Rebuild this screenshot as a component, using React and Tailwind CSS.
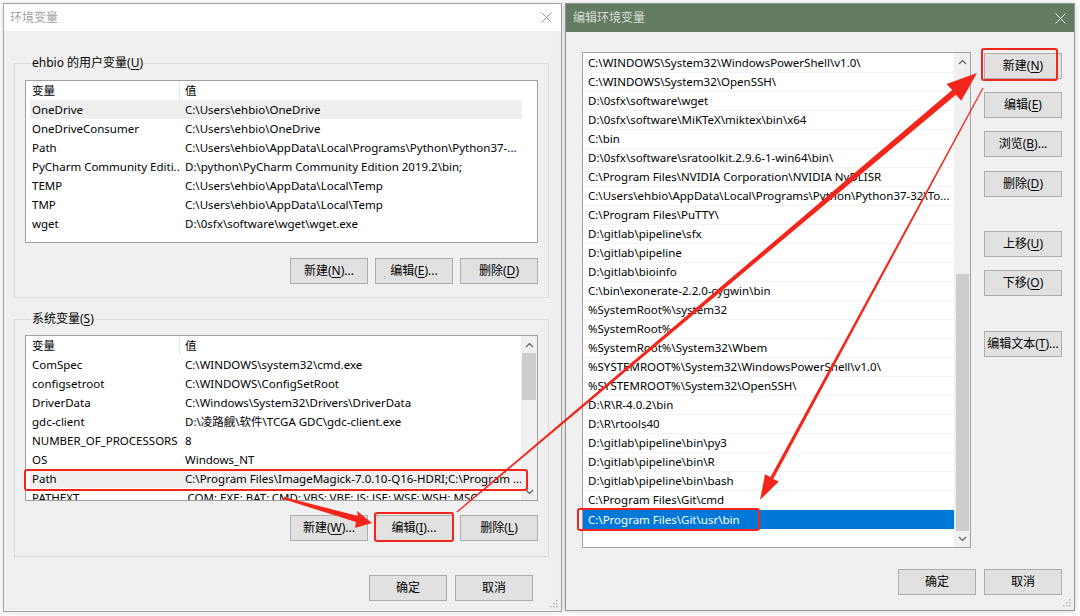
import React from 'react';

const userVars = [
  ['OneDrive', 'C:\\Users\\ehbio\\OneDrive', true],
  ['OneDriveConsumer', 'C:\\Users\\ehbio\\OneDrive'],
  ['Path', 'C:\\Users\\ehbio\\AppData\\Local\\Programs\\Python\\Python37-...'],
  ['PyCharm Community Editi...', 'D:\\python\\PyCharm Community Edition 2019.2\\bin;'],
  ['TEMP', 'C:\\Users\\ehbio\\AppData\\Local\\Temp'],
  ['TMP', 'C:\\Users\\ehbio\\AppData\\Local\\Temp'],
  ['wget', 'D:\\0sfx\\software\\wget\\wget.exe'],
];

const sysVars = [
  ['ComSpec', 'C:\\WINDOWS\\system32\\cmd.exe'],
  ['configsetroot', 'C:\\WINDOWS\\ConfigSetRoot'],
  ['DriverData', 'C:\\Windows\\System32\\Drivers\\DriverData'],
  ['gdc-client', 'D:\\凌路觎\\软件\\TCGA GDC\\gdc-client.exe'],
  ['NUMBER_OF_PROCESSORS', '8'],
  ['OS', 'Windows_NT'],
  ['Path', 'C:\\Program Files\\ImageMagick-7.0.10-Q16-HDRI;C:\\Program ...', true],
  ['PATHEXT', '.COM;.EXE;.BAT;.CMD;.VBS;.VBE;.JS;.JSE;.WSF;.WSH;.MSC'],
];

const paths = [
  'C:\\WINDOWS\\System32\\WindowsPowerShell\\v1.0\\',
  'C:\\WINDOWS\\System32\\OpenSSH\\',
  'D:\\0sfx\\software\\wget',
  'D:\\0sfx\\software\\MiKTeX\\miktex\\bin\\x64',
  'C:\\bin',
  'D:\\0sfx\\software\\sratoolkit.2.9.6-1-win64\\bin\\',
  'C:\\Program Files\\NVIDIA Corporation\\NVIDIA NvDLISR',
  'C:\\Users\\ehbio\\AppData\\Local\\Programs\\Python\\Python37-32\\To...',
  'C:\\Program Files\\PuTTY\\',
  'D:\\gitlab\\pipeline\\sfx',
  'D:\\gitlab\\pipeline',
  'D:\\gitlab\\bioinfo',
  'C:\\bin\\exonerate-2.2.0-cygwin\\bin',
  '%SystemRoot%\\system32',
  '%SystemRoot%',
  '%SystemRoot%\\System32\\Wbem',
  '%SYSTEMROOT%\\System32\\WindowsPowerShell\\v1.0\\',
  '%SYSTEMROOT%\\System32\\OpenSSH\\',
  'D:\\R\\R-4.0.2\\bin',
  'D:\\R\\rtools40',
  'D:\\gitlab\\pipeline\\bin\\py3',
  'D:\\gitlab\\pipeline\\bin\\R',
  'D:\\gitlab\\pipeline\\bin\\bash',
  'C:\\Program Files\\Git\\cmd',
  'C:\\Program Files\\Git\\usr\\bin',
];

const Btn = ({ children, className = '' }) => (
  <div className={`h-[26px] w-[78px] shrink-0 flex items-center justify-center bg-[#e1e1e1] border border-[#adadad] text-[12px] text-black ${className}`}>
    {children}
  </div>
);

const Acc = ({ pre, k, post = '' }) => (
  <span>
    {pre}
    <span className="underline underline-offset-2">{k}</span>
    {post}
  </span>
);

const Chevron = ({ down }) => (
  <svg width="9" height="6" viewBox="0 0 9 6" className="block">
    <polyline
      points={down ? '1,1 4.5,4.5 8,1' : '1,5 4.5,1.5 8,5'}
      fill="none"
      stroke="#606060"
      strokeWidth="1.2"
    />
  </svg>
);

const CloseX = ({ color }) => (
  <svg width="11" height="11" viewBox="0 0 11 11">
    <line x1="0.5" y1="0.5" x2="10.5" y2="10.5" stroke={color} strokeWidth="1" />
    <line x1="10.5" y1="0.5" x2="0.5" y2="10.5" stroke={color} strokeWidth="1" />
  </svg>
);

const Grip = () => (
  <svg width="10" height="10" viewBox="0 0 10 10" className="absolute right-[2px] bottom-[2px]">
    <rect x="7" y="1" width="1.5" height="1.5" fill="#b8b8b8" />
    <rect x="4" y="4" width="1.5" height="1.5" fill="#b8b8b8" />
    <rect x="7" y="4" width="1.5" height="1.5" fill="#b8b8b8" />
    <rect x="1" y="7" width="1.5" height="1.5" fill="#b8b8b8" />
    <rect x="4" y="7" width="1.5" height="1.5" fill="#b8b8b8" />
    <rect x="7" y="7" width="1.5" height="1.5" fill="#b8b8b8" />
  </svg>
);

const VarRows = ({ rows }) => (
  <div className="ml-[4px] w-[492px]">
    <div className="h-[19px] flex items-center">
      <div className="w-[150px] h-full pl-[2px] flex items-center border-r border-[#e5e5e5]">变量</div>
      <div className="pl-[5px]">值</div>
    </div>
    {rows.map(([name, value, hl]) => (
      <div key={name} className={`h-[19px] flex items-center ${hl ? 'bg-[#efefef]' : ''}`}>
        <div className="w-[150px] pl-[2px] whitespace-nowrap overflow-hidden">{name}</div>
        <div className="flex-1 pl-[5px] whitespace-nowrap overflow-hidden">{value}</div>
      </div>
    ))}
  </div>
);

const Group = ({ label, children }) => (
  <fieldset className="border border-[#dcdcdc] px-[10px] m-0 min-w-0">
    <legend className="ml-[6px] px-[1px] text-[12px] leading-[16px] text-black">{label}</legend>
    {children}
  </fieldset>
);

export default function App() {
  return (
    <div className="relative w-[1080px] h-[616px] overflow-hidden bg-white font-['Microsoft_YaHei_UI','Noto_Sans','Noto_Sans_CJK_SC',sans-serif] text-[11.5px] text-black">
      <div className="flex pt-[3px] pl-[3px] gap-[3px]">
        {/* 环境变量 */}
        <div className="relative w-[559px] h-[609px] bg-[#f0f0f0] border border-[#a6a6a6] flex flex-col shadow-[0_0_6px_rgba(0,0,0,0.15)]">
          <div className="h-[27px] bg-white flex items-center justify-between pl-[6px] pr-[9px]">
            <span className="text-[12px] text-[#a2a2a2]">环境变量</span>
            <CloseX color="#9a9a9a" />
          </div>
          <div className="flex-1 pl-[10px] pr-[12px] pt-[24px] flex flex-col">
            <Group label={<Acc pre="ehbio 的用户变量(" k="U" post=")" />}>
              <div className="mt-[9px] h-[163px] bg-white border border-[#a0a0a0] overflow-hidden">
                <VarRows rows={userVars} />
              </div>
              <div className="mt-[15px] mb-[13px] flex justify-end gap-[7px]">
                <Btn><Acc pre="新建(" k="N" post=")..." /></Btn>
                <Btn><Acc pre="编辑(" k="E" post=")..." /></Btn>
                <Btn><Acc pre="删除(" k="D" post=")" /></Btn>
              </div>
            </Group>
            <div className="mt-[13px]">
              <Group label={<Acc pre="系统变量(" k="S" post=")" />}>
                <div className="mt-[8px] h-[166px] bg-white border border-[#a0a0a0] overflow-hidden flex">
                  <div className="flex-1 overflow-hidden">
                    <VarRows rows={sysVars} />
                  </div>
                  <div className="w-[16px] bg-[#f0f0f0] flex flex-col items-center">
                    <div className="h-[17px] flex items-center justify-center"><Chevron /></div>
                    <div className="w-[14px] h-[47px] bg-[#cdcdcd]" />
                    <div className="flex-1" />
                    <div className="h-[17px] flex items-center justify-center"><Chevron down /></div>
                  </div>
                </div>
                <div className="mt-[14px] mb-[15px] flex justify-end gap-[7px]">
                  <Btn><Acc pre="新建(" k="W" post=")..." /></Btn>
                  <Btn><Acc pre="编辑(" k="I" post=")..." /></Btn>
                  <Btn><Acc pre="删除(" k="L" post=")" /></Btn>
                </div>
              </Group>
            </div>
            <div className="mt-[18px] flex justify-end gap-[8px] pr-[16px]">
              <Btn>确定</Btn>
              <Btn>取消</Btn>
            </div>
          </div>
          <Grip />
        </div>

        {/* 编辑环境变量 */}
        <div className="relative w-[510px] h-[608px] bg-[#f0f0f0] border border-[#8f9a8f] flex flex-col shadow-[0_0_6px_rgba(0,0,0,0.2)]">
          <div className="h-[28px] bg-[#637b63] flex items-center justify-between pl-[7px] pr-[8px]">
            <span className="text-[12px] text-[#d6ddd6]">编辑环境变量</span>
            <CloseX color="#eef2ee" />
          </div>
          <div className="flex-1 pl-[16px] pr-[12px] pt-[20px] flex flex-col">
            <div className="flex gap-[13px]">
              <div className="w-[389px] h-[496px] bg-white border border-[#a0a0a0] flex">
                <div className="flex-1 overflow-hidden pt-[1px]">
                  {paths.map((p, i) =>
                    i === paths.length - 1 ? (
                      <div key={p} className="h-[19px] pl-[5px] flex items-center bg-[#0078d7] text-white whitespace-nowrap">{p}</div>
                    ) : (
                      <div key={p} className="h-[19px] pl-[5px] flex items-center border-b border-[#f3f3f3] whitespace-nowrap overflow-hidden">{p}</div>
                    )
                  )}
                </div>
                <div className="w-[16px] bg-[#f0f0f0] flex flex-col items-center">
                  <div className="h-[17px] flex items-center justify-center"><Chevron /></div>
                  <div className="h-[204px]" />
                  <div className="w-[13px] h-[257px] bg-[#cdcdcd]" />
                  <div className="flex-1 flex items-center justify-center"><Chevron down /></div>
                </div>
              </div>
              <div className="pt-[1px] flex flex-col">
                <Btn><Acc pre="新建(" k="N" post=")" /></Btn>
                <Btn className="mt-[13px]"><Acc pre="编辑(" k="E" post=")" /></Btn>
                <Btn className="mt-[13px]"><Acc pre="浏览(" k="B" post=")..." /></Btn>
                <Btn className="mt-[14px]"><Acc pre="删除(" k="D" post=")" /></Btn>
                <Btn className="mt-[34px]"><Acc pre="上移(" k="U" post=")" /></Btn>
                <Btn className="mt-[13px]"><Acc pre="下移(" k="O" post=")" /></Btn>
                <Btn className="mt-[35px]"><Acc pre="编辑文本(" k="T" post=")..." /></Btn>
              </div>
            </div>
            <div className="mt-[21px] flex justify-end gap-[8px]">
              <Btn className="border-[#0078d7]">确定</Btn>
              <Btn>取消</Btn>
            </div>
          </div>
          <Grip />
        </div>
      </div>

      {/* annotations */}
      <svg className="absolute inset-0 pointer-events-none" width="1080" height="616" viewBox="0 0 1080 616">
        <g fill="none" stroke="#f4261b" strokeWidth="2">
          <rect x="982" y="49" width="75" height="31" rx="2" />
          <rect x="25" y="470" width="502" height="20" rx="2" />
          <rect x="375" y="513" width="78" height="28" rx="2" />
          <rect x="578" y="509" width="181" height="21" rx="2" />
        </g>
        <polygon
          fill="#f4261b"
          points="456.6,511.5 952.1,90.1 946.5,84.0 977,73 961.3,100.8 955.9,94.7 457.4,512.5"
        />
        <polygon
          fill="#f4261b"
          points="982.5,87.8 770.5,477 765.0,474.3 760,500 778.7,481.6 773.3,479 983.5,88.2"
        />
        <polygon
          fill="#f4261b"
          points="284,497 358,516 357,511 372,523 355,528 356,522 283,499"
        />
      </svg>
    </div>
  );
}
